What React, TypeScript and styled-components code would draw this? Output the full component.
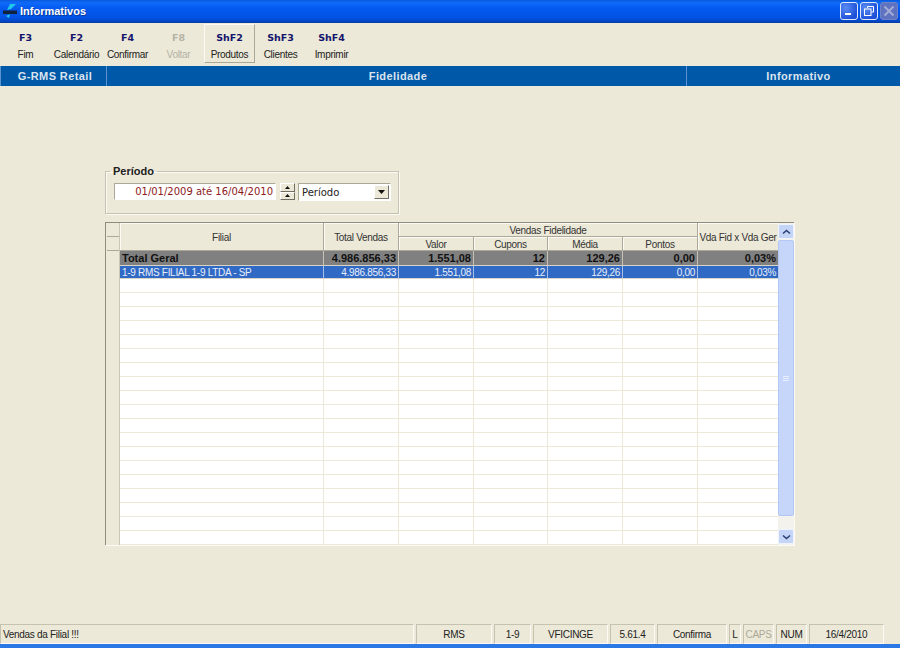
import React from "react";
import styled, { createGlobalStyle } from "styled-components";

const Global = createGlobalStyle`
  html, body { margin: 0; padding: 0; background: #ece9d8; }
  #root { width: 900px; height: 648px; overflow: hidden; }
  * { box-sizing: border-box; }
`;

const Win = styled.div`
  width: 900px; height: 648px; display: flex; flex-direction: column;
  background: #ece9d8; font-family: "Liberation Sans", Arial, sans-serif; font-size: 10px; color: #222;
  letter-spacing: -0.3px;
`;
const TitleBar = styled.div`
  height: 23px; flex: none; display: flex; align-items: center; padding: 0 2px 1px 2px; gap: 2px;
  background: linear-gradient(180deg, #0a5ad8 0%, #0f6afa 12%, #0358ee 40%, #0254e6 75%, #0246c4 92%, #0a3aa0 100%);
`;
const TitleText = styled.span`
  flex: 1; color: #fff; font-weight: bold; font-size: 11px; letter-spacing: 0;
  text-shadow: 1px 1px 0 #0a3a9a;
`;
const WinButton = styled.div<{ $off?: boolean }>`
  width: 18px; height: 18px; border-radius: 3px; display: flex; align-items: center; justify-content: center;
  border: 1px solid ${(p) => (p.$off ? "#6f83c8" : "#dfe8fb")};
  background: ${(p) => (p.$off ? "#5f72c0" : "radial-gradient(circle at 30% 30%, #5a8cf4, #1d4fd8 75%)")};
`;
const WinButtons = styled.div`display: flex; gap: 2px;`;

const Toolbar = styled.div`
  height: 43px; flex: none; display: flex; padding: 1px 0 0 0; align-items: flex-start;
`;
const ToolButton = styled.div<{ $active?: boolean; $off?: boolean }>`
  width: 51px; height: 39px; display: flex; flex-direction: column; align-items: center; padding-top: 8px;
  color: ${(p) => (p.$off ? "#b5b2a6" : "#222")};
  ${(p) => p.$active && `
    background: #ece9d8;
    border: 1px solid; border-color: #fbfaf5 #aca899 #aca899 #fbfaf5; padding-top: 7px;
  `}
`;
const ToolKey = styled.span<{ $off?: boolean }>`
  font-weight: bold; line-height: 11px; font-family: "DejaVu Sans", sans-serif; font-size: 9.5px; letter-spacing: -0.1px;
  color: ${(p) => (p.$off ? "#b5b2a6" : "#14146c")};
`;
const ToolLabel = styled.span`font-size: 10px; line-height: 12px; margin-top: 6px; white-space: nowrap;`;

const Band = styled.div`
  height: 20px; flex: none; display: flex; background: #0058a8; color: #dbe4ee;
  font-weight: bold; font-size: 11px; letter-spacing: 0.4px;
`;
const BandCell = styled.div<{ $w?: number; $shift: number }>`
  ${(p) => (p.$w ? `width: ${p.$w}px; flex: none;` : "flex: 1;")}
  display: flex; align-items: center; justify-content: center;
  border-right: 1px solid #5c93cf; padding: 0 0 1px ${(p) => p.$shift}px;
  &:first-child { border-left: 1px solid #5c93cf; }
  &:last-child { border-right: none; }
`;

const Content = styled.div`flex: 1; display: flex; flex-direction: column; padding: 80px 0 0 105px;`;

const Group = styled.fieldset`
  margin: 0; width: 294px; height: 48px; border: 1px solid #c5c2b0; border-radius: 0; padding: 0 7px 0 8px;
  box-shadow: inset 1px 1px 0 #fbfaf5, 1px 1px 0 #fbfaf5; display: flex; align-items: flex-start; min-width: 0;
`;
const Legend = styled.legend`
  font-weight: bold; font-size: 11px; color: #222; padding: 0 3px; margin-left: -4px; line-height: 10px; letter-spacing: 0;
`;
const DateField = styled.div`
  width: 162px; height: 17px; background: #fff; border: 1px solid; border-color: #aca899 #fff #fff #aca899;
  color: #8c1a1a; font-family: "DejaVu Sans", sans-serif; font-size: 10px; letter-spacing: 0; display: flex; align-items: center; justify-content: flex-end; padding-right: 2px; margin: 7px 4px 0 0; white-space: nowrap;
`;
const Spin = styled.div`display: flex; flex-direction: column; width: 15px; height: 17px; margin: 7px 3px 0 0;`;
const SpinBtn = styled.div`
  flex: 1; background: #ece9d8; border: 1px solid; border-color: #fff #716f64 #716f64 #fff;
  display: flex; align-items: center; justify-content: center;
`;
const Select = styled.div`
  width: 93px; height: 18px; background: #fff; border: 1px solid; border-color: #aca899 #fff #fff #aca899;
  font-family: "DejaVu Sans", sans-serif; font-size: 10px; letter-spacing: 0; color: #222; display: flex; align-items: center; justify-content: space-between; padding: 0 1px 0 3px; margin-top: 7px;
`;
const DropBtn = styled.div`
  width: 15px; height: 14px; background: #ece9d8; border: 1px solid; border-color: #fff #716f64 #716f64 #fff;
  display: flex; align-items: center; justify-content: center;
`;

const GridBox = styled.div`
  margin-top: 8px; width: 689px; height: 323px; display: flex; border-top: 1px solid #8f8d80; border-left: 1px solid #8f8d80;
  box-shadow: inset 1px 1px 0 #716f64, 1px 1px 0 #fbfaf5; background: #fff;
`;
const Indicator = styled.div`
  width: 14px; flex: none; background: #ece9d8; display: flex; flex-direction: column; border-right: 1px solid #c9c6b6; padding-left: 1px;
`;
const IndHead = styled.div`height: 14px; flex: none; border-bottom: 1px solid #aca899;`;
const IndBody = styled.div`flex: 1;`;
const Table = styled.div`flex: 1; display: grid; grid-template-columns: 204px 75px 75px 74px 75px 75px 81px; grid-template-rows: 14px 14px 15px 13px repeat(19, 14px); min-width: 0; align-content: start;`;
const HeadCell = styled.div<{ $col?: string; $row?: string }>`
  grid-column: ${(p) => p.$col || "auto"}; grid-row: ${(p) => p.$row || "auto"};
  background: #ece9d8; display: flex; align-items: center; justify-content: center; font-size: 10px; color: #333;
  border-right: 1px solid #aca899; border-bottom: 1px solid #aca899; box-shadow: inset 1px 1px 0 #fbfaf5; white-space: nowrap; overflow: hidden; padding-top: 1px;
`;
const Cell = styled.div<{ $kind: "total" | "sel" | "empty"; $left?: boolean }>`
  display: flex; align-items: center; justify-content: ${(p) => (p.$left ? "flex-start" : "flex-end")};
  padding: ${(p) => (p.$left ? "0 0 0 2px" : "0 2px 0 0")};
  white-space: nowrap; overflow: hidden;
  ${(p) => p.$kind === "total" && `background:#808080;color:#111;font-weight:bold;font-size:11px;letter-spacing:0;border-right:1px solid #c6c3b4;border-bottom:1px solid #d8d5c6;`}
  ${(p) => p.$kind === "sel" && `background:#316ac5;color:#e8eefa;font-size:10px;border-right:1px solid #a9c0e6;border-bottom:1px solid #d8d5c6;`}
  ${(p) => p.$kind === "empty" && `background:#fff;border-right:1px solid #ece9d8;border-bottom:1px solid #ece9d8;`}
`;
const Scroll = styled.div`
  width: 16px; flex: none; background: #f4f2ec; display: flex; flex-direction: column; padding: 1px 0;
`;
const ScrollBtn = styled.div`
  height: 15px; flex: none; background: #c5d5f8; border: 1px solid #eef3fd; border-radius: 2px;
  display: flex; align-items: center; justify-content: center;
`;
const Thumb = styled.div`
  margin-top: 1px; height: 276px; flex: none; background: #c6d6fb; border: 1px solid #b4c8f5; border-radius: 2px;
  display: flex; align-items: center; justify-content: center;
`;
const Grip = styled.div`width: 6px; height: 5px; border-top: 1px solid #e8eefc; border-bottom: 1px solid #e8eefc; background: linear-gradient(#c6d6fb 40%, #e8eefc 40%, #e8eefc 60%, #c6d6fb 60%);`;
const ScrollGap = styled.div`flex: 1;`;

const Status = styled.div`height: 20px; flex: none; display: flex; gap: 2px;`;
const StatusCell = styled.div<{ $w: number; $left?: boolean; $off?: boolean }>`
  width: ${(p) => p.$w}px; flex: none; border: 1px solid; border-color: #c5c2b0 #fbfaf5 #fbfaf5 #c5c2b0;
  display: flex; align-items: center; justify-content: ${(p) => (p.$left ? "flex-start" : "center")};
  padding-left: ${(p) => (p.$left ? "2px" : "0")}; color: ${(p) => (p.$off ? "#aca899" : "#222")}; white-space: nowrap;
`;
const BottomEdge = styled.div`height: 4px; flex: none; background: #2a78e4;`;

const LogoIcon = () => (
  <svg width="16" height="16" viewBox="0 0 16 16">
    <path d="M8 1 L14 1 L9 6 L5 7 Z" fill="#21c7e8" />
    <path d="M4 13 L8 11 L7 15 Z" fill="#21c7e8" />
    <rect x="1" y="7.5" width="14" height="3.5" fill="#11233e" />
  </svg>
);
const Up = () => (<svg width="9" height="6" viewBox="0 0 9 6"><path d="M1 4.5 L4.5 1.5 L8 4.5" fill="none" stroke="#2b3f73" strokeWidth="1.6" /></svg>);
const Down = () => (<svg width="9" height="6" viewBox="0 0 9 6"><path d="M1 1.5 L4.5 4.5 L8 1.5" fill="none" stroke="#2b3f73" strokeWidth="1.6" /></svg>);
const TriUp = () => (<svg width="5" height="3" viewBox="0 0 5 3"><path d="M2.5 0 L5 3 L0 3 Z" fill="#111" /></svg>);
const TriDown = () => (<svg width="7" height="4" viewBox="0 0 7 4"><path d="M0 0 L7 0 L3.5 4 Z" fill="#111" /></svg>);

const tools: [string, string, boolean?, boolean?][] = [
  ["F3", "Fim"], ["F2", "Calendário"], ["F4", "Confirmar"], ["F8", "Voltar", true],
  ["ShF2", "Produtos", false, true], ["ShF3", "Clientes"], ["ShF4", "Imprimir"],
];
const total = ["Total Geral", "4.986.856,33", "1.551,08", "12", "129,26", "0,00", "0,03%"];
const sel = ["1-9 RMS FILIAL 1-9 LTDA - SP", "4.986.856,33", "1.551,08", "12", "129,26", "0,00", "0,03%"];

export default function App() {
  return (
    <Win>
      <Global />
      <TitleBar>
        <LogoIcon />
        <TitleText>Informativos</TitleText>
        <WinButtons>
          <WinButton>
            <svg width="10" height="10" viewBox="0 0 10 10"><rect x="1" y="7" width="6" height="2" fill="#fff" /></svg>
          </WinButton>
          <WinButton>
            <svg width="12" height="12" viewBox="0 0 12 12"><path d="M4.5 3 V1.5 H10.5 V7 H8.5" fill="none" stroke="#fff" /><rect x="1.5" y="4" width="6.5" height="6.5" fill="none" stroke="#fff" /></svg>
          </WinButton>
          <WinButton $off>
            <svg width="12" height="12" viewBox="0 0 12 12"><path d="M1.5 1.5 L10.5 10.5 M10.5 1.5 L1.5 10.5" stroke="#a3acd6" strokeWidth="2" /></svg>
          </WinButton>
        </WinButtons>
      </TitleBar>
      <Toolbar>
        {tools.map(([k, l, off, active]) => (
          <ToolButton key={k} $off={off} $active={active}>
            <ToolKey $off={off}>{k}</ToolKey>
            <ToolLabel>{l}</ToolLabel>
          </ToolButton>
        ))}
      </Toolbar>
      <Band>
        <BandCell $w={107} $shift={3}>G-RMS Retail</BandCell>
        <BandCell $shift={3}>Fidelidade</BandCell>
        <BandCell $w={213} $shift={10}>Informativo</BandCell>
      </Band>
      <Content>
        <Group>
          <Legend>Período</Legend>
          <DateField>01/01/2009 até 16/04/2010</DateField>
          <Spin>
            <SpinBtn><TriUp /></SpinBtn>
            <SpinBtn><TriUp /></SpinBtn>
          </Spin>
          <Select>
            Período
            <DropBtn><TriDown /></DropBtn>
          </Select>
        </Group>
        <GridBox>
          <Indicator>
            <IndHead />
            <IndHead />
            <IndBody />
          </Indicator>
          <Table>
            <HeadCell $col="1" $row="1 / span 2">Filial</HeadCell>
            <HeadCell $col="2" $row="1 / span 2">Total Vendas</HeadCell>
            <HeadCell $col="3 / span 4" $row="1">Vendas Fidelidade</HeadCell>
            <HeadCell $col="7" $row="1 / span 2">Vda Fid x Vda Ger</HeadCell>
            <HeadCell $col="3" $row="2">Valor</HeadCell>
            <HeadCell $col="4" $row="2">Cupons</HeadCell>
            <HeadCell $col="5" $row="2">Média</HeadCell>
            <HeadCell $col="6" $row="2">Pontos</HeadCell>
            {total.map((t, i) => <Cell key={"t" + i} $kind="total" $left={i === 0}>{t}</Cell>)}
            {sel.map((t, i) => <Cell key={"s" + i} $kind="sel" $left={i === 0}>{t}</Cell>)}
            {Array.from({ length: 19 * 7 }, (_, i) => <Cell key={i} $kind="empty" />)}
          </Table>
          <Scroll>
            <ScrollBtn><Up /></ScrollBtn>
            <Thumb><Grip /></Thumb>
            <ScrollGap />
            <ScrollBtn><Down /></ScrollBtn>
          </Scroll>
        </GridBox>
      </Content>
      <Status>
        <StatusCell $w={414} $left>Vendas da Filial !!!</StatusCell>
        <StatusCell $w={76}>RMS</StatusCell>
        <StatusCell $w={37}>1-9</StatusCell>
        <StatusCell $w={75}>VFICINGE</StatusCell>
        <StatusCell $w={45}>5.61.4</StatusCell>
        <StatusCell $w={70}>Confirma</StatusCell>
        <StatusCell $w={12}>L</StatusCell>
        <StatusCell $w={31} $off>CAPS</StatusCell>
        <StatusCell $w={31}>NUM</StatusCell>
        <StatusCell $w={75}>16/4/2010</StatusCell>
      </Status>
      <BottomEdge />
    </Win>
  );
}
